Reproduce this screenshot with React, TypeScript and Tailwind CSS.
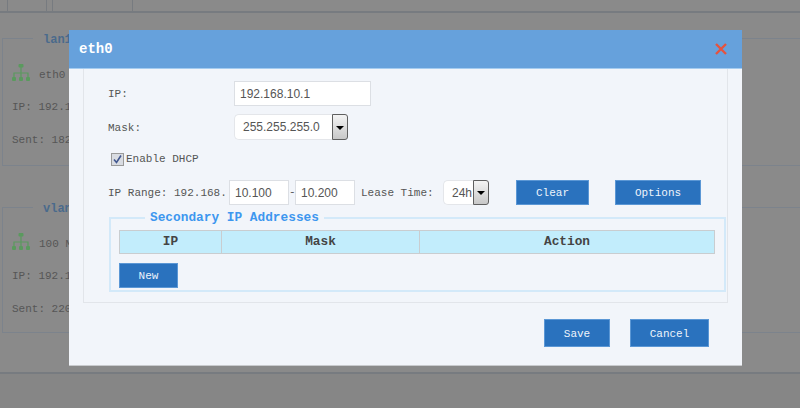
const mono = "font-['Liberation_Mono',monospace]";

function Net({ color = "#5a9a5e" }: { color?: string }) {
  return (
    <svg width="18" height="18" viewBox="0 0 18 18" className="shrink-0">
      <rect x="6.5" y="0" width="5" height="3.5" rx="1" fill={color} />
      <path d="M9 3v11M2 14V9h14v5M9 9v5" stroke={color} strokeWidth="1.2" fill="none" />
      <rect x="0" y="13" width="4" height="4" rx="1" fill={color} />
      <rect x="7" y="13" width="4" height="4" rx="1" fill={color} />
      <rect x="14" y="13" width="4" height="4" rx="1" fill={color} />
    </svg>
  );
}

function BgCard({ title, first, sent, className }: { title: string; first: string; sent: string; className: string }) {
  return (
    <div className={`relative ml-[2px] w-[1000px] border border-[#7c838c] pl-[9px] ${mono} text-[11px] text-[#565656] ${className}`}>
      <span className="absolute left-[30px] top-[-6px] bg-[#8a8a8a] px-[10px] text-[12px] font-bold leading-[14px] text-[#4a6a8c]">{title}</span>
      <div className="mt-[25px] flex h-[18px] items-center gap-[9px]">
        <Net />
        <span className="pt-[4px]">{first}</span>
      </div>
      <div className="mt-[18px] leading-[14px]">IP: 192.168.10.1</div>
      <div className="mt-[19px] leading-[14px]">Sent: {sent}</div>
    </div>
  );
}

function Arrow({ h }: { h: string }) {
  return (
    <span className={`flex w-[16px] ${h} shrink-0 items-center justify-center rounded-r-[3px] border border-[#5f5f5f] bg-gradient-to-b from-[#f4f4f4] to-[#c8c8c8]`}>
      <span className="mt-[1px] h-0 w-0 border-x-[4px] border-t-[4px] border-x-transparent border-t-black" />
    </span>
  );
}

function Btn({ children, className }: { children: React.ReactNode; className: string }) {
  return (
    <button className={`flex items-center justify-center border border-[#5b97d5] bg-[#2a72be] pt-[2px] text-[11px] text-[#eef4fb] ${mono} ${className}`}>
      {children}
    </button>
  );
}

const sans = "font-['Liberation_Sans',sans-serif] text-[#555] text-[12px]";

export default function App() {
  return (
    <div className="relative h-[408px] w-[800px] overflow-hidden bg-[#8a8a8a]">
      {/* page behind the dialog */}
      <div className="flex h-[13px] border-b-2 border-[#777b80] pl-[7px]">
        <div className="w-[40px] border-x border-[#777b80]" />
        <div className="w-[5px]" />
        <div className="w-[81px] border-x border-[#777b80]" />
      </div>
      <BgCard title="lan1" first="eth0" sent="182" className="mt-[25px] h-[128px]" />
      <BgCard title="vlan" first="100 Mbps" sent="220" className="mt-[41px] h-[126px]" />
      <div className="mt-[39px] h-[36px] border-t-2 border-[#777b80] bg-[#868686]" />

      {/* dialog */}
      <div className="absolute left-[69px] top-[30px] flex h-[336px] w-[673px] flex-col border-b border-[#c8cacd] bg-[#f2f5fa]">
        <div className={`flex h-[39px] shrink-0 items-center justify-between border-b border-[#a5ccf0] bg-[#66a1dc] pl-[10px] pr-[15px] ${mono} text-[14px] font-bold text-white`}>
          <span>eth0</span>
          <svg width="12" height="12" viewBox="0 0 12 12">
            <path d="M1 1l10 10M11 1L1 11" stroke="#e5533f" strokeWidth="2.4" />
          </svg>
        </div>

        <div className="mx-[14px] h-[234px] shrink-0 border-x border-b border-[#e2e5ea] pl-[24px]">
          <div className={`mt-[12px] flex h-[25px] items-center ${mono} text-[11px] text-[#555]`}>
            <span className="w-[126px] pt-[2px]">IP:</span>
            <span className={`flex h-[25px] w-[137px] items-center border border-[#dcdfe4] bg-white pl-[5px] ${sans}`}>192.168.10.1</span>
          </div>
          <div className={`mt-[8px] flex h-[26px] items-center ${mono} text-[11px] text-[#555]`}>
            <span className="w-[126px] pt-[2px]">Mask:</span>
            <span className={`flex h-[26px] w-[98px] items-center rounded-l-[5px] border border-r-0 border-[#e4e6ea] bg-white pl-[8px] ${sans}`}>255.255.255.0</span>
            <Arrow h="h-[26px]" />
          </div>
          <div className={`ml-[3px] mt-[11px] flex h-[16px] items-center gap-[2px] ${mono} text-[11px] text-[#555]`}>
            <span className="flex h-[13px] w-[13px] items-center justify-center border border-[#9a9a9a] bg-[#d9dce2]">
              <svg width="11" height="11" viewBox="0 0 11 11">
                <path d="M2 5.5l2.5 3L9 1.5" stroke="#41578f" strokeWidth="1.6" fill="none" />
              </svg>
            </span>
            <span>Enable DHCP</span>
          </div>
          <div className={`mt-[13px] flex h-[25px] items-center ${mono} text-[11px] text-[#555]`}>
            <span className="w-[121px] whitespace-nowrap pt-[2px]">IP Range: 192.168.</span>
            <span className={`flex h-[25px] w-[60px] items-center border border-[#dcdfe4] bg-white pl-[5px] ${sans}`}>10.100</span>
            <span className="w-[6px] text-center">-</span>
            <span className={`flex h-[25px] w-[60px] items-center border border-[#dcdfe4] bg-white pl-[5px] ${sans}`}>10.200</span>
            <span className="ml-[6px] w-[82px] whitespace-nowrap pt-[2px]">Lease Time:</span>
            <span className={`flex h-[25px] w-[30px] items-center rounded-l-[5px] border border-r-0 border-[#e4e6ea] bg-white pl-[8px] ${sans}`}>24h</span>
            <Arrow h="h-[25px]" />
            <Btn className="ml-[27px] h-[25px] w-[73px]">Clear</Btn>
            <Btn className="ml-[26px] h-[25px] w-[86px]">Options</Btn>
          </div>

          <div className="relative ml-[1px] mt-[12px] h-[75px] w-[617px] border-2 border-[#d3e9f9] pl-[8px] pt-[11px]">
            <span className={`absolute left-[34px] top-[-9px] bg-[#f2f5fa] px-[5px] text-[12.8px] font-bold leading-[15px] text-[#3d97ef] ${mono}`}>
              Secondary IP Addresses
            </span>
            <div className={`flex h-[24px] w-[596px] border border-[#c9cdd0] bg-[#c2edfc] text-[12.8px] font-bold text-[#444] ${mono}`}>
              <span className="flex w-[102px] items-center justify-center border-r border-[#c9cdd0]">IP</span>
              <span className="flex w-[198px] items-center justify-center border-r border-[#c9cdd0]">Mask</span>
              <span className="flex flex-1 items-center justify-center">Action</span>
            </div>
            <Btn className="mt-[9px] h-[25px] w-[59px]">New</Btn>
          </div>
        </div>

        <div className="mt-[16px] flex justify-end gap-[20px] pr-[33px]">
          <Btn className="h-[28px] w-[66px]">Save</Btn>
          <Btn className="h-[28px] w-[79px]">Cancel</Btn>
        </div>
      </div>
    </div>
  );
}
